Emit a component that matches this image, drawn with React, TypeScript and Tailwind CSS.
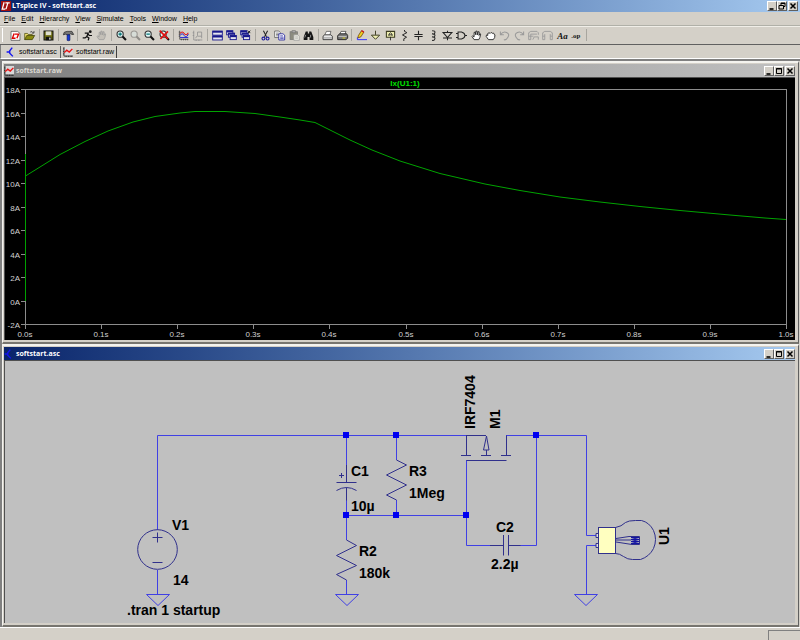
import type { ReactNode } from "react";

const menus = ["File", "Edit", "Hierarchy", "View", "Simulate", "Tools", "Window", "Help"];

type Tool = { name: string; icon: ReactNode; off?: boolean };

const lens = (
  <>
    <circle cx="6" cy="6" r="4.5" fill="#dff5f5" stroke="#333" strokeWidth="1.6" />
    <path d="M9.5 9.5l5 5" stroke="#111" strokeWidth="3" />
  </>
);

const navyWindow = (x: number, y: number, w: number, h: number) => (
  <>
    <rect x={x} y={y} width={w} height={h} fill="#e4e4ee" stroke="#16168c" strokeWidth="1.3" />
    <rect x={x} y={y} width={w} height="2.4" fill="#16168c" />
  </>
);

const hand = "M4.5 14L1.5 9.5l1-1.2L4.5 10V3.5l1.6-.4L7 7V1.8l1.8-.3L9.3 7l1-4.6 1.6.3-.3 5.2 1.3-2.5 1.2.5-1.2 5-1.6 3.1z";

const toolGroups: Tool[][] = [
  [
    {
      name: "New schematic",
      icon: (
        <>
          <path d="M1.5 2h9.5l3.5 3v10h-13z" fill="#fff" stroke="#444" />
          <path d="M6 5L3.5 12H8M7 6h5.5L10 12" stroke="#e00000" strokeWidth="2" fill="none" />
        </>
      ),
    },
    {
      name: "Open",
      icon: (
        <>
          <path d="M1 14V5h4l1 1.5h6V8" fill="#f0e070" stroke="#444400" />
          <path d="M1 14L4 8h11.5L12 14z" fill="#8a8a10" stroke="#333300" />
          <path d="M9 3q3-2 4.5 1.2M14.5 1.5v3h-3" stroke="#222" fill="none" />
        </>
      ),
    },
  ],
  [
    {
      name: "Save",
      icon: (
        <>
          <rect x="1.5" y="1.5" width="13" height="13" fill="#6c6c10" stroke="#111" strokeWidth="1.5" />
          <rect x="4" y="2" width="8" height="5.5" fill="#deded0" />
          <rect x="4" y="10" width="8" height="5" fill="#111" />
          <rect x="9" y="11" width="2" height="3" fill="#ddd" />
        </>
      ),
    },
  ],
  [
    {
      name: "Control panel",
      icon: (
        <>
          <path d="M0.5 7q0-5 5.500-5h7L15.500 6.500h-3l-1-1.500-2 2H6L4 6z" fill="#777" stroke="#222" />
          <path d="M6 7h4v8q-2 1-4 0z" fill="#1438d8" stroke="#0a1860" />
        </>
      ),
    },
  ],
  [
    {
      name: "Run",
      icon: (
        <>
          <circle cx="12" cy="2.5" r="2" fill="#111" />
          <path d="M4 4.5h5L7 9.5l-2.5 2H1M8.5 5l2 3h4M7 9.5l3 2-1 3.5" stroke="#111" strokeWidth="1.8" fill="none" />
        </>
      ),
    },
    { name: "Halt", off: true, icon: <path d={hand} fill="#c4c0b8" stroke="#989898" /> },
  ],
  [
    { name: "Zoom in", icon: <>{lens}<path d="M3.5 6h5M6 3.5v5" stroke="#007070" strokeWidth="1.8" /></> },
    { name: "Pan", off: true, icon: <g opacity=".35">{lens}</g> },
    { name: "Zoom out", icon: <>{lens}<path d="M3.5 6h5" stroke="#007070" strokeWidth="1.8" /></> },
    { name: "Zoom full extents", icon: <>{lens}<path d="M1 1l12 12M13 2L2 13" stroke="#e01010" strokeWidth="2.4" /></> },
  ],
  [
    {
      name: "Autorange",
      icon: (
        <>
          <path d="M2.5 1v12.5H15M1 3h2M1 6h2M1 9h2M5 15v-2M8 15v-2M11 15v-2M14 15v-2" stroke="#333" fill="none" />
          <path d="M3 5q3-4 6 0t6-1" stroke="#e01010" strokeWidth="1.5" fill="none" />
          <path d="M3 8q3-5 6 0t6-2M3 11h12" stroke="#2020d0" strokeWidth="1.4" fill="none" />
        </>
      ),
    },
    {
      name: "Plot settings",
      off: true,
      icon: (
        <path d="M2.5 1v13.5H15M5 12l3-4V3h6v6H8M14 9v3M1 4h2M1 8h2M6 16v-2M10 16v-2" stroke="#909090" strokeWidth="1.2" fill="none" />
      ),
    },
  ],
  [
    { name: "Tile windows", icon: <>{navyWindow(1, 1.5, 14, 6)}{navyWindow(1, 8.5, 14, 6)}</> },
    { name: "Cascade windows", icon: <>{navyWindow(1, 1, 9, 6)}{navyWindow(3.5, 4.5, 9, 6)}{navyWindow(6, 8, 9, 6)}</> },
    {
      name: "Close all windows",
      icon: (
        <>
          {navyWindow(1, 1, 9, 6)}
          {navyWindow(3, 4.5, 9, 6)}
          {navyWindow(5, 8, 9, 6)}
          <path d="M11.5 1l3.5 3.5M15 1l-3.5 3.5" stroke="#111" strokeWidth="1.3" />
        </>
      ),
    },
  ],
  [
    {
      name: "Cut",
      icon: (
        <>
          <path d="M5 1l4.5 9M11 1L6.5 10" stroke="#222" strokeWidth="1.5" />
          <circle cx="5" cy="12.5" r="2.1" fill="none" stroke="#1c1c9c" strokeWidth="1.6" />
          <circle cx="11" cy="12.5" r="2.1" fill="none" stroke="#1c1c9c" strokeWidth="1.6" />
        </>
      ),
    },
    {
      name: "Copy",
      icon: (
        <>
          <path d="M1 1.5h6l2 2V11H1z" fill="#fff" stroke="#444" />
          <path d="M3 4.5h4M3 6.5h4M3 8.5h4" stroke="#555" />
          <path d="M7 5.5h6l2.5 2V14.5H7z" fill="#fff" stroke="#1c1c9c" strokeWidth="1.2" />
          <path d="M9 8.5h4M9 10.5h5M9 12.5h5" stroke="#1c1c9c" />
        </>
      ),
    },
    {
      name: "Paste",
      icon: (
        <>
          <rect x="1.5" y="2.5" width="11" height="11.5" fill="#8c8c80" stroke="#777" />
          <rect x="4.5" y="1" width="5" height="3" fill="#aaa" stroke="#777" />
          <path d="M7 7h6l2 2v6H7z" fill="#e8e8e0" stroke="#999" />
          <path d="M9 10h4M9 12h4" stroke="#aaa" />
        </>
      ),
    },
    {
      name: "Find",
      icon: (
        <>
          <path d="M4 2h3v3h2V2h3l3 8v4.5H9.5V10h-3v4.5H1V10z" fill="#151515" />
          <path d="M4 7l-1.5 4M11 7v4" stroke="#bbb" />
        </>
      ),
    },
  ],
  [
    {
      name: "Print setup",
      icon: (
        <>
          <path d="M4 7l2.5-5H13L11.5 7" fill="#fff" stroke="#444" />
          <path d="M1.5 9L4 7h9l2 2v5H1.5z" fill="#e8e8e8" stroke="#333" strokeWidth="1.3" />
          <path d="M2 11.5h12" stroke="#777" />
        </>
      ),
    },
    {
      name: "Print",
      icon: (
        <>
          <path d="M4 6l2-4h7l-1.5 4" fill="#fff" stroke="#333" />
          <path d="M1 8l3-2.5h10L15.5 8v4L13 14H1z" fill="#777" stroke="#222" strokeWidth="1.3" />
          <path d="M2 9.5h12" stroke="#ddd" />
          <path d="M8 11.7h4" stroke="#d8d020" strokeWidth="1.4" />
        </>
      ),
    },
  ],
  [
    {
      name: "Wire",
      icon: (
        <>
          <path d="M2.500 11.500L3.500 8 8 1l3.500 2L7 10z" fill="#f0d020" stroke="#5a3000" />
          <path d="M8 1l3.500 2" stroke="#d02020" strokeWidth="2" />
          <path d="M2 11v3h14" stroke="#3030ff" strokeWidth="1.4" fill="none" />
        </>
      ),
    },
    { name: "Ground", icon: <path d="M8 1v6M2 7.5h12L8 13.5z" fill="#eeeeb0" stroke="#3c3c20" strokeWidth="1.4" /> },
    {
      name: "Label net",
      icon: (
        <>
          <path d="M2 2h12v8.5H2z" fill="#eeeeb0" stroke="#3c3c20" strokeWidth="1.5" />
          <path d="M8 10v5M5.7 8.7V6L8 4l2.3 2v2.7M5.7 7h4.6" stroke="#222" strokeWidth="1.2" fill="none" />
        </>
      ),
    },
    { name: "Resistor", icon: <path d="M8 0v2l3.5 1.8L5 7.2l6 3.3-4 2.2V16" stroke="#222" strokeWidth="1.4" fill="none" /> },
    { name: "Capacitor", icon: <path d="M8 1v5.3M8 9.7V15M2 6.5h12M2 9.5h12" stroke="#222" strokeWidth="1.6" /> },
    { name: "Inductor", icon: <path d="M6 1q5 0 4 3t-4 1.5q5 0 4 3T6 10q5 0 4 3t-4 2" stroke="#222" strokeWidth="1.5" fill="none" /> },
    { name: "Diode", icon: <path d="M8 1v2M8 11v4M1.5 3.500h13L8 11zM1.5 11.5h13" stroke="#222" strokeWidth="1.5" fill="none" /> },
    { name: "Component", icon: <path d="M0 5h3M0 11h3M3 3h5q5 1.5 5 5t-5 5H3zM13 8h3" stroke="#222" strokeWidth="1.5" fill="none" /> },
    { name: "Move", icon: <path d={hand} fill="#fff" stroke="#222" strokeWidth="1.3" /> },
    {
      name: "Drag",
      icon: (
        <path d="M5 14L1.5 9l1-2L4 8V5l2-1 1.5 1L9 3.5l1.5 1.3 2-.3 1 2 1 .5-.5 4-2 3z" fill="#fff" stroke="#222" strokeWidth="1.3" />
      ),
    },
    {
      name: "Undo",
      off: true,
      icon: <path d="M2 2v5h5M2.5 6.5Q6 1.5 11 3.5t2 7-6 3.5" stroke="#999" strokeWidth="1.5" fill="none" />,
    },
    {
      name: "Redo",
      off: true,
      icon: <path d="M14 2v5H9M13.5 6.5Q10 1.5 5 3.5t-2 7T9 14" stroke="#999" strokeWidth="1.5" fill="none" />,
    },
    {
      name: "Rotate",
      off: true,
      icon: <path d="M1 14V4l3-2h9l2 2v3M4 14V6h9M1 14h3M1 9h7M7 14l2-4h6M15 10v4" stroke="#999" strokeWidth="1.3" fill="none" />,
    },
    {
      name: "Mirror",
      off: true,
      icon: <path d="M1 14V4l3-2h8l3 2v10M4 14V6M12 14V6M1 14h3M12 14h3M1 9h3M12 9h3" stroke="#999" strokeWidth="1.3" fill="none" />,
    },
    {
      name: "Text",
      icon: <text x="8" y="13" textAnchor="middle" fontSize="13" fontWeight="bold" fontStyle="italic" fontFamily="Liberation Serif, serif">Aa</text>,
    },
    {
      name: "SPICE directive",
      icon: <text x="7" y="11" textAnchor="middle" fontSize="10" fontWeight="bold" fontFamily="Liberation Serif, serif">.op</text>,
    },
  ],
];

function Divider() {
  return <div className="mx-[2px] h-3 w-px shrink-0 bg-[#a8a69f]" />;
}

function PlotIcon() {
  return (
    <svg viewBox="0 0 16 16" className="size-[10px] shrink-0">
      <rect x="1" width="15" height="14" fill="#d8d8d8" />
      <path d="M1.5 0v14.5H16M0 3h2M0 7h2M0 11h2M5 16v-2M9 16v-2M13 16v-2" stroke="#222" strokeWidth="1.3" fill="none" />
      <path d="M2 9l4-4 4 3 5-5" stroke="#e81010" strokeWidth="2.2" fill="none" />
    </svg>
  );
}

function SchematicIcon() {
  return (
    <svg viewBox="0 0 16 16" className="size-[10px] shrink-0">
      <path d="M10 1L6 6v4l5 5M1 8h5" stroke="#1414f0" strokeWidth="2.2" fill="none" />
    </svg>
  );
}

const glyphs = {
  Minimize: <path d="M1.5 7h4" stroke="#000" strokeWidth="1.6" />,
  Maximize: <path d="M1.5 1.5h5v5h-5zM1 2h6" stroke="#000" fill="none" />,
  Restore: <path d="M3 3V1h4v3.5H5.5M1 3.5h4.5V7H1zM3 1.5h4" stroke="#000" fill="none" />,
  Close: <path d="M1.5 1.5l5 5M6.5 1.5l-5 5" stroke="#000" strokeWidth="1.5" />,
};

function CaptionButton({ kind }: { kind: keyof typeof glyphs }) {
  return (
    <button
      aria-label={kind}
      className="flex h-[10px] w-[10px] items-center justify-center border border-t-white border-l-white border-r-[#606060] border-b-[#606060] bg-[#d4d0c8]"
    >
      <svg viewBox="0 0 8 8" className="size-2 shrink-0">{glyphs[kind]}</svg>
    </button>
  );
}

function Caption({ restore }: { restore?: boolean }) {
  return (
    <div className="ml-auto flex">
      <CaptionButton kind="Minimize" />
      <CaptionButton kind={restore ? "Restore" : "Maximize"} />
      <div className="w-px" />
      <CaptionButton kind="Close" />
    </div>
  );
}

type ChildWindowProps = { title: string; icon: ReactNode; active?: boolean; children: ReactNode };

function ChildWindow({ title, icon, active, children }: ChildWindowProps) {
  return (
    <section className="mr-px border-t-2 border-r border-b-2 border-l border-t-[#f4f3ef] border-r-[#606060] border-b-[#77756f] border-l-[#f4f3ef] bg-[#d4d0c8] pt-px pr-[3px] pb-[2px] pl-px">
      <header
        className={
          active
            ? "flex h-[13px] items-center gap-[2px] bg-linear-to-r from-[#0a246a] to-[#a6caf0] text-white"
            : "flex h-[13px] items-center gap-[2px] bg-linear-to-r from-[#808080] to-[#c0c0c0] text-[#dcd9d2]"
        }
      >
        {icon}
        <h2 className="font-['Open_Sans',sans-serif] text-[7px] leading-3 font-bold">{title}</h2>
        <Caption />
      </header>
      <div className="border-t border-l border-[#505050]">{children}</div>
    </section>
  );
}

const yTicks = ["18A", "16A", "14A", "12A", "10A", "8A", "6A", "4A", "2A", "0A", "-2A"];
const xTicks = ["0.0s", "0.1s", "0.2s", "0.3s", "0.4s", "0.5s", "0.6s", "0.7s", "0.8s", "0.9s", "1.0s"];

function Waveform() {
  return (
    <svg viewBox="5 78 790 262" className="block w-full bg-black" fontFamily="Liberation Sans, sans-serif" fontSize="8">
      <text x="405" y="86" textAnchor="middle" fill="#00e000" fontWeight="bold">Ix(U1:1)</text>
      <rect x="25.5" y="89.5" width="761" height="235" fill="none" stroke="#8c8c8c" />
      {yTicks.map((label, i) => {
        const y = Math.round(89 + i * 23.5);
        return (
          <g key={label}>
            <path d={`M21 ${y + 0.5}h4`} stroke="#8c8c8c" />
            <text x="20" y={y + 4} textAnchor="end" fill="#d0d0d0">{label}</text>
          </g>
        );
      })}
      {xTicks.map((label, i) => {
        const x = Math.round(25 + i * 76.1);
        return (
          <g key={label}>
            <path d={`M${x + 0.5} 325v4`} stroke="#8c8c8c" />
            <text x={x} y="337" textAnchor="middle" fill="#d0d0d0">{label}</text>
          </g>
        );
      })}
      <path d="M25.5 154v147" stroke="#00a000" />
      <path
        d="M25.5 176L40 167 60 154.5 85 141.5 108 131 133 122 155 116.5 180 113 195 111.5H225L255 113.5 280 117 300 120 315 122.5 332 131 350 140 372 150 400 161 440 173.5 485 184 520 190.5 560 197 600 202 640 206.5 680 210.5 730 215 765 218 786 219.5"
        fill="none"
        stroke="#00a400"
      />
    </svg>
  );
}

const nodes = [[346, 435], [396, 435], [536, 435], [346, 515], [396, 515], [466, 515]];

function Schematic() {
  return (
    <svg viewBox="5 361 790 262" className="block w-full bg-[#c0c0c0]" fontFamily="Liberation Sans, sans-serif" fontSize="14" fontWeight="bold">
      {/* wires */}
      <g stroke="#4040e4" fill="none">
        <path d="M157.5 530V435.5H466M506 435.5H586.5V535.5H596M596 545.5H586.5V594" />
        <path d="M346.5 435V465M346.5 500V540M346.5 580V594M396.5 435V460M396.5 500V515M346.5 515.5H466.5M466.5 460V545.5H490M520 545.5H536.5V435M157.5 570V594" />
        <path d="M146.5 594.5h23l-11.5 11zM335.5 594.5h23l-11.5 11zM574.5 594.5h23l-11.5 11z" />
      </g>
      {/* parts */}
      <g stroke="#30308c" fill="none">
        <circle cx="157.5" cy="549.5" r="19.8" />
        <path d="M152.5 537.5h10M157.5 532.5v10M152.5 562.5h10" />
        <path d="M346.5 465v17.5M336.5 482.5h20M336.5 490.5q10-6 20 0M346.5 487.5v13M339 475.5h5M341.5 473v5" />
        <path d="M396.5 460l10 5-20 10 20 10-20 10 10 5" />
        <path d="M346.5 540l10 5.5-20 10 20 10-20 9 10 5.5" />
        <path d="M466 435.5h20M466.5 435.5v20M461 455.5h10M481 455.5h10M501 455.5h10M506.5 455.5v-20M466.5 460.5h40" />
        <path d="M486.5 436l-3 14h5.5l-2.5-14M486.5 450v5" />
        <path d="M490 545.5h13.5M508.5 545.5h12M503.5 535v20.5M508.5 535v20.5" />
        <path d="M615.5 527.5q6-1 10-5 3-2 10-2h6q8 2 12 10 4 9 0 18-4 8-13 11h-8q-5 0-9-3-4-3-8-3" />
        <path d="M596 533.5h3v4h-3zM596 543.5h3v4h-3z" fill="#e0e0e0" />
        <rect x="598.5" y="527.5" width="17" height="26" fill="#ffffc0" />
        <path d="M616 538.5l13-2h10.5v8H632l-16-2.5M616 540h15" />
        <path d="M631 537.5h8l-8 2h8l-8 2h8l-8 2h8" stroke="#1414a0" />
      </g>
      {nodes.map(([x, y]) => (
        <rect key={`${x}-${y}`} x={x - 3} y={y - 3} width="6" height="6" fill="#0000f0" />
      ))}
      <text x="172" y="530">V1</text>
      <text x="173" y="585">14</text>
      <text x="127" y="615">.tran 1 startup</text>
      <text x="351" y="476">C1</text>
      <text x="351" y="511">10µ</text>
      <text x="409" y="476">R3</text>
      <text x="409" y="498">1Meg</text>
      <text x="359" y="556">R2</text>
      <text x="359" y="578">180k</text>
      <text x="496" y="532">C2</text>
      <text x="491" y="569">2.2µ</text>
      <text transform="translate(475 429) rotate(-90)">IRF7404</text>
      <text transform="translate(500 429) rotate(-90)">M1</text>
      <text transform="translate(669 545) rotate(-90)">U1</text>
    </svg>
  );
}

export default function App() {
  return (
    <div className="flex min-h-screen flex-col bg-[#d4d0c8] font-['Liberation_Sans',sans-serif] text-[7px] leading-3 text-black">
      <header className="flex h-3 items-center gap-px bg-linear-to-r from-[#0a246a] to-[#a6caf0] pr-[2px] pl-px text-white">
        <svg viewBox="0 0 16 16" className="size-[10px] shrink-0">
          <rect width="16" height="16" fill="#a01010" />
          <path d="M5 2L2 13h5M7 3h7M11 3L8 13" stroke="#fff" strokeWidth="2" fill="none" />
        </svg>
        <h1 className="font-['Open_Sans',sans-serif] font-bold">LTspice IV - softstart.asc</h1>
        <Caption restore />
      </header>

      <nav className="flex h-[14px] items-center gap-[6px] border-b border-[#b0b0a8] pl-1">
        {menus.map((menu) => (
          <button key={menu}>
            <span className="underline">{menu[0]}</span>
            {menu.slice(1)}
          </button>
        ))}
      </nav>

      <div className="flex h-[19px] items-center border-t border-b border-t-[#f0eee8] border-b-[#606060] pb-px">
        <div className="mr-[5px] ml-[2px] h-[14px] w-px bg-white" />
        <div role="toolbar" aria-label="Main" className="flex w-[576px] items-center">
          {toolGroups.map((group, i) => (
            <div key={i} className="contents">
              {i > 0 && <Divider />}
              {group.map((tool) => (
                <button key={tool.name} aria-label={tool.name} disabled={tool.off} className="flex min-w-0 flex-1 justify-center">
                  <svg viewBox="0 0 16 16" className="size-[11px] overflow-visible" fill="#111">{tool.icon}</svg>
                </button>
              ))}
            </div>
          ))}
        </div>
        <Divider />
      </div>

      <div role="tablist" className="flex h-[14px] items-center border-b border-l border-b-white border-l-[#808080] pl-[5px]">
        <button role="tab" aria-selected="true" className="flex w-[54px] items-center gap-[3px]">
          <SchematicIcon />
          softstart.asc
        </button>
        <button
          role="tab"
          aria-selected="false"
          className="flex h-3 w-[57px] items-center gap-[3px] border-r border-l border-r-[#404040] border-l-[#606060] pl-[2px]"
        >
          <PlotIcon />
          softstart.raw
        </button>
      </div>

      <main className="grow border-t-2 border-l-2 border-[#808080]">
        <ChildWindow title="softstart.raw" icon={<PlotIcon />}>
          <Waveform />
        </ChildWindow>
        <ChildWindow title="softstart.asc" icon={<SchematicIcon />} active>
          <Schematic />
        </ChildWindow>
      </main>

      <footer className="flex h-[13px] items-end justify-end border-t border-white">
        <div className="h-[10px] w-8 border-t border-l border-[#808080]" />
      </footer>
    </div>
  );
}
